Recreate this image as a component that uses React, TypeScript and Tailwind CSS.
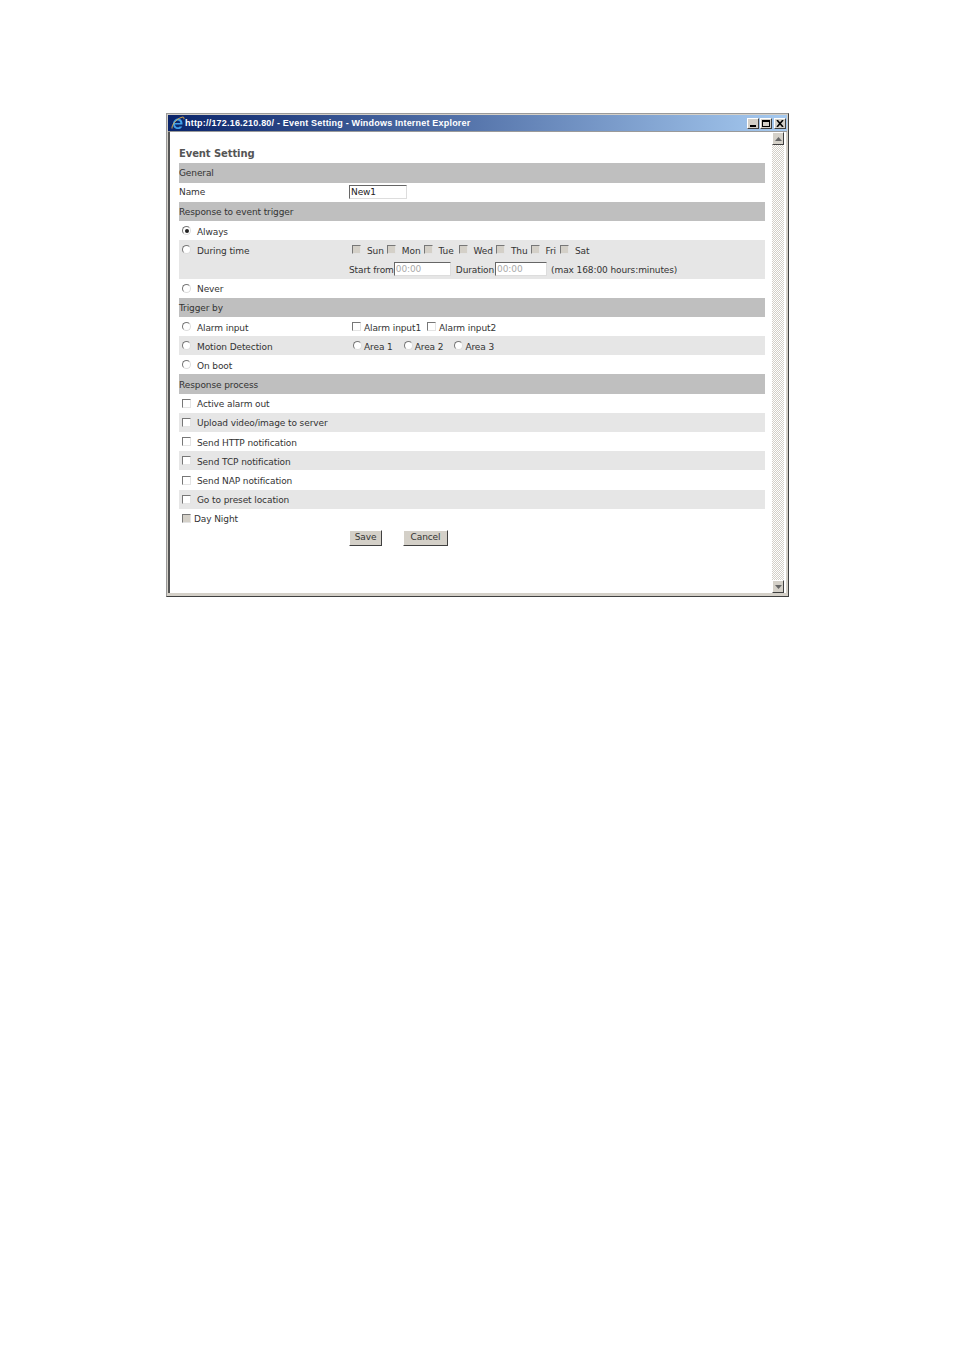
const font = "font-['DejaVu_Sans',Verdana,sans-serif]";

function Check({ disabled = false }: { disabled?: boolean }) {
  return (
    <input
      type="checkbox"
      disabled={disabled}
      readOnly
      className={`appearance-none block m-0 shrink-0 w-[9px] h-[9px] border border-t-[#777] border-l-[#777] border-r-[#e4e4e4] border-b-[#e4e4e4] ${disabled ? "bg-[#d4d0c8]" : "bg-white"}`}
    />
  );
}

function Radio({ checked = false }: { checked?: boolean }) {
  return (
    <span className="relative flex items-center justify-center shrink-0 w-[9px] h-[9px] rounded-full border border-t-[#777] border-l-[#777] border-r-[#ddd] border-b-[#ddd] bg-white">
      {checked && <span className="w-[4px] h-[4px] rounded-full bg-[#222]" />}
    </span>
  );
}

function Row({
  shade,
  children,
  tall,
}: {
  shade?: boolean;
  children: React.ReactNode;
  tall?: boolean;
}) {
  return (
    <div className={`flex ${tall ? "h-[38.4px] items-start" : "h-[19.2px] items-center pt-[3px]"} ${shade ? "bg-[#e6e6e6]" : ""}`}>
      {children}
    </div>
  );
}

function Section({ label }: { label: string }) {
  return (
    <div className="flex items-center h-[19.2px] pt-[2px] bg-[#bfbfbf] text-[#333]">
      <span>{label}</span>
    </div>
  );
}

function Opt({ control, label, shade, children }: { control: React.ReactNode; label: string; shade?: boolean; children?: React.ReactNode }) {
  return (
    <Row shade={shade}>
      <div className="w-[170px] flex items-center pl-[3px] shrink-0">
        <span className="w-[15px] shrink-0 -mt-[3px]">{control}</span>
        <span>{label}</span>
      </div>
      {children}
    </Row>
  );
}

const days: { name: string; gap: string }[] = [
  { name: "Sun", gap: "pr-[3px]" },
  { name: "Mon", gap: "pr-[3px]" },
  { name: "Tue", gap: "pr-[5px]" },
  { name: "Wed", gap: "pr-[3px]" },
  { name: "Thu", gap: "pr-[3px]" },
  { name: "Fri", gap: "pr-[4px]" },
  { name: "Sat", gap: "pr-[3px]" },
];

function TextBox({ value, width, disabled }: { value: string; width: string; disabled?: boolean }) {
  return (
    <input
      readOnly
      value={value}
      className={`${width} h-[14px] -mt-[3px] px-[1px] text-[9px] leading-none outline-none bg-white border border-t-[#666] border-l-[#666] border-r-[#ddd] border-b-[#ddd] ${disabled ? "text-[#aaa]" : "text-[#222]"} ${font}`}
    />
  );
}

function WinBtn({ children }: { children: React.ReactNode }) {
  return (
    <span className="flex items-center justify-center w-[12px] h-[11px] bg-[#d4d0c8] border border-t-white border-l-white border-r-[#404040] border-b-[#404040]">
      {children}
    </span>
  );
}

function ScrollBtn({ down }: { down?: boolean }) {
  return (
    <div className="flex items-center justify-center h-[13px] bg-[#d4d0c8] border border-t-white border-l-white border-r-[#404040] border-b-[#404040]">
      <svg width="7" height="4" viewBox="0 0 7 4" className="fill-[#666]">
        <path d={down ? "M0 0h7L3.5 4z" : "M3.5 0L7 4H0z"} />
      </svg>
    </div>
  );
}

export default function App() {
  return (
    <div className={`min-h-[1351px] bg-white pt-[113px] pl-[166px] ${font}`}>
      <div className="w-[623px] h-[484px] flex flex-col bg-[#d4d0c8] border border-[#9a9a9a] border-b-[#404040] border-r-[#404040] p-[1px]">
        <div className="h-[16px] shrink-0 flex items-center pl-[3px] pr-[1px] bg-[linear-gradient(90deg,#0a246a,#a6caf0)]">
          <svg width="14" height="14" viewBox="0 0 14 14" className="shrink-0">
            <path d="M3 8.5h8.5C11.8 4.5 9.5 2.5 7 2.5 4.2 2.5 2 5 2 8c0 3 2.2 5 5 5 2 0 3.5-1 4.3-2.6H8.6c-.4.6-1 .9-1.7.9-1.5 0-2.6-.9-3-2.8zm.6-1.6c.4-1.4 1.6-2.4 3.2-2.4 1.5 0 2.4 1 2.6 2.4z" fill="#3f9fe8" fillRule="evenodd" />
            <path d="M1 12.5C.6 9 5 3 11 1.2c1.6-.5 2.5.4 1.8 2" fill="none" stroke="#e9b64a" strokeWidth="0.9" />
          </svg>
          <span className="text-[9px] leading-none font-bold text-white font-['Liberation_Sans',Arial,sans-serif] tracking-[0.2px]">
            http://172.16.210.80/ - Event Setting - Windows Internet Explorer
          </span>
          <span className="ml-auto flex items-center gap-0">
            <WinBtn>
              <span className="self-end mb-[1px] w-[6px] h-[2px] bg-black" />
            </WinBtn>
            <span className="w-[1px]" />
            <WinBtn>
              <span className="w-[8px] h-[7px] border border-t-2 border-black" />
            </WinBtn>
            <span className="w-[2px]" />
            <WinBtn>
              <svg width="8" height="7" viewBox="0 0 8 7">
                <path d="M1 0l6 7M7 0L1 7" stroke="#000" strokeWidth="1.6" />
              </svg>
            </WinBtn>
          </span>
        </div>
        <div className="h-px shrink-0 bg-[#9a9a9a]" />
        <div className="flex-1 min-h-0 flex bg-white border-l-2 border-l-[#555] mr-[1px] mb-[2px]">
          <div className="w-[602px] shrink-0 pl-[9px] pr-[7px] text-[9px] leading-none text-[#333] tracking-[-0.1px]">
            <h1 className="h-[31.4px] flex items-end pb-[4px] text-[10px] font-bold text-[#555]">Event Setting</h1>
            <Section label="General" />
            <Row>
              <span className="w-[170px] shrink-0 -mt-[2px]">Name</span>
              <TextBox value="New1" width="w-[58px]" />
            </Row>
            <Section label="Response to event trigger" />
            <Opt control={<Radio checked />} label="Always" />
            <Row shade tall>
              <div className="w-[170px] h-[19.2px] pt-[3px] flex items-center pl-[3px] shrink-0">
                <span className="w-[15px] shrink-0 -mt-[3px]">
                  <Radio />
                </span>
                <span>During time</span>
              </div>
              <div className="flex flex-col">
                <div className="h-[19.2px] pt-[3px] flex items-center pl-[3px]">
                  {days.map((d) => (
                    <span key={d.name} className="flex items-center">
                      <span className="-mt-[3px]"><Check disabled /></span>
                      <span className={`pl-[6px] ${d.gap}`}>{d.name}</span>
                    </span>
                  ))}
                </div>
                <div className="h-[19.2px] pt-[3px] flex items-center">
                  <span>Start from</span>
                  <TextBox value="00:00" width="w-[57px]" disabled />
                  <span className="ml-[5px] mr-[1px]">Duration</span>
                  <TextBox value="00:00" width="w-[52px]" disabled />
                  <span className="ml-[4px]">(max 168:00 hours:minutes)</span>
                </div>
              </div>
            </Row>
            <Opt control={<Radio />} label="Never" />
            <Section label="Trigger by" />
            <Opt control={<Radio />} label="Alarm input">
              <div className="flex items-center pl-[3px]">
                <span className="-mt-[3px]"><Check /></span>
                <span className="pl-[3px] pr-[6px]">Alarm input1</span>
                <span className="-mt-[3px]"><Check /></span>
                <span className="pl-[3px]">Alarm input2</span>
              </div>
            </Opt>
            <Opt shade control={<Radio />} label="Motion Detection">
              <div className="flex items-center pl-[4px]">
                {["Area 1", "Area 2", "Area 3"].map((a) => (
                  <span key={a} className="flex items-center pr-[11px]">
                    <span className="-mt-[3px]"><Radio /></span>
                    <span className="pl-[2px]">{a}</span>
                  </span>
                ))}
              </div>
            </Opt>
            <Opt control={<Radio />} label="On boot" />
            <Section label="Response process" />
            <Opt control={<Check />} label="Active alarm out" />
            <Opt shade control={<Check />} label="Upload video/image to server" />
            <Opt control={<Check />} label="Send HTTP notification" />
            <Opt shade control={<Check />} label="Send TCP notification" />
            <Opt control={<Check />} label="Send NAP notification" />
            <Opt shade control={<Check />} label="Go to preset location" />
            <Row>
              <div className="flex items-center pl-[3px]">
                <span className="w-[12px] shrink-0 -mt-[3px]"><Check disabled /></span>
                <span>Day Night</span>
              </div>
            </Row>
            <div className="flex items-center h-[19.2px] pl-[170px]">
              <button className="w-[33px] h-[16px] mr-[21px] bg-[#d4d0c8] text-[9px] leading-none text-[#333] border border-t-white border-l-white border-r-[#404040] border-b-[#404040]">Save</button>
              <button className="w-[45px] h-[16px] bg-[#d4d0c8] text-[9px] leading-none text-[#333] border border-t-white border-l-white border-r-[#404040] border-b-[#404040]">Cancel</button>
            </div>
          </div>
          <div className="w-[12px] shrink-0 flex flex-col justify-between bg-[repeating-conic-gradient(#d4d0c8_0_25%,#fff_0_50%)] bg-[length:2px_2px]">
            <ScrollBtn />
            <ScrollBtn down />
          </div>
        </div>
      </div>
    </div>
  );
}
